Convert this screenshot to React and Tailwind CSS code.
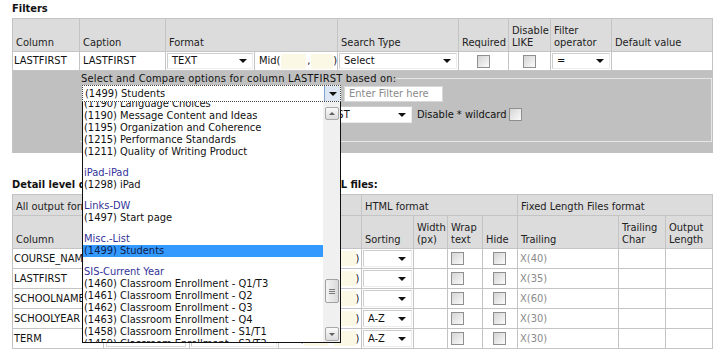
import React from "react";

function Arrow() {
  return <span className="block w-0 h-0 border-x-[4px] border-x-transparent border-t-[4px] border-t-[#111]" />;
}

function Sel({ text, className }) {
  return (
    <div className={"flex items-center justify-between bg-white border border-[#cdcdcd] border-r-[#ececec] border-b-[#ececec] pl-[4px] pr-[5px] " + className}>
      <span>{text}</span>
      <Arrow />
    </div>
  );
}

function Check() {
  return <div className="w-[13px] h-[13px] border border-[#8f8f8f] bg-linear-to-br from-[#d4d4d4] to-[#fbfbfb]" />;
}

function Beige({ className }) {
  return <div className={"h-[15px] bg-[#fbf9e6] " + className} />;
}

const hc = "bg-[#dcdcdc] border-r border-b border-[#c4c4c4] flex items-end pl-[3px] pb-[2px] text-[#222]";
const dc = "bg-white border-r border-b border-[#c4c4c4] flex items-center";

const groups = [
  { label: null, items: ["(1190) Language Choices", "(1190) Message Content and Ideas", "(1195) Organization and Coherence", "(1215) Performance Standards", "(1211) Quality of Writing Product"] },
  { label: "iPad-iPad", items: ["(1298) iPad"] },
  { label: "Links-DW", items: ["(1497) Start page"] },
  { label: "Misc.-List", items: ["(1499) Students"] },
  { label: "SIS-Current Year", items: ["(1460) Classroom Enrollment - Q1/T3", "(1461) Classroom Enrollment - Q2", "(1462) Classroom Enrollment - Q3", "(1463) Classroom Enrollment - Q4", "(1458) Classroom Enrollment - S1/T1", "(1459) Classroom Enrollment - S2/T2"] },
];

const rows = [
  { col: "COURSE_NAME", sort: "", tr: "X(40)" },
  { col: "LASTFIRST", sort: "", tr: "X(35)" },
  { col: "SCHOOLNAME", sort: "", tr: "X(60)" },
  { col: "SCHOOLYEAR", sort: "A-Z", tr: "X(30)" },
  { col: "TERM", sort: "A-Z", tr: "X(30)" },
];

export default function App() {
  return (
    <div className="relative w-[726px] h-[359px] bg-white overflow-hidden font-['DejaVu_Sans_Condensed','DejaVu_Sans',sans-serif] text-[11px] leading-[12px] text-[#111] pl-[12px] pt-[3px]">
      <div className="font-bold h-[15px]">Filters</div>

      {/* Filters table */}
      <div className="grid grid-cols-[67px_86px_89px_83px_121px_50px_42px_61px_101px] w-[701px] border-l border-t border-[#c4c4c4]">
        <div className={hc + " h-[33px]"}>Column</div>
        <div className={hc}>Caption</div>
        <div className={hc + " col-span-2"}>Format</div>
        <div className={hc}>Search Type</div>
        <div className={hc}>Required</div>
        <div className={hc}><span>Disable<br />LIKE</span></div>
        <div className={hc}><span>Filter<br />operator</span></div>
        <div className={hc}>Default value</div>

        <div className={dc + " h-[19px] pl-[1px] bg-[#f8f8f8]"}>LASTFIRST</div>
        <div className={dc + " pl-[3px]"}>LASTFIRST</div>
        <div className={dc + " p-[1px]"}><Sel text="TEXT" className="w-full h-full" /></div>
        <div className={dc + " pl-[4px]"}>
          <span>Mid(</span>
          <Beige className="w-[25px] ml-[1px]" />
          <span className="mx-[1px]">,</span>
          <Beige className="w-[22px]" />
          <span>)</span>
        </div>
        <div className={dc + " p-[1px]"}><Sel text="Select" className="w-full h-full" /></div>
        <div className={dc + " justify-center"}><Check /></div>
        <div className={dc + " justify-center"}><Check /></div>
        <div className={dc + " p-[1px]"}><Sel text="=" className="w-full h-full" /></div>
        <div className={dc}></div>

        {/* gray options row */}
        <div className="col-span-9 bg-[#c0c0c0] border-r border-b border-[#c0c0c0] pl-[67px] pt-[2px] pb-[10px]">
          <div className="flex h-[12px]">
            <span className="pl-[1px] whitespace-nowrap tracking-[0.2px]">Select and Compare options for column LASTFIRST based on:</span>
            <div className="flex-1 mt-[5px] border-t border-r border-[#e6e6e6]" />
          </div>
          <div className="border-r border-b border-[#e6e6e6] pl-[2px] pb-[18px]">
            <div className="flex items-start">
              <div className="w-[259px] h-[17px] bg-white border border-dotted border-[#444] flex items-center justify-between">
                <span className="pl-[2px]">(1499) Students</span>
                <div className="w-[16px] h-full bg-[#dde7f3] border-l border-[#7da2ce] flex items-center justify-center"><Arrow /></div>
              </div>
              <div className="ml-[3px] mt-[1px] w-[99px] h-[16px] bg-white border border-[#d8d8d8] flex items-center pl-[4px] text-[#8a8a8a]">Enter Filter here</div>
            </div>
            <div className="flex items-center mt-[4px] h-[17px]">
              <Sel text="LASTFIRST" className="ml-[204px] w-[126px] h-[17px] pl-[10px]" />
              <span className="ml-[5px]">Disable * wildcard</span>
              <div className="ml-[2px]"><Check /></div>
            </div>
          </div>
        </div>
      </div>

      <div className="font-bold mt-[26px] h-[15px] whitespace-nowrap">Detail level data columns for Text, CSV, XML, PDF and HTML files:</div>

      {/* Detail table */}
      <div className="grid grid-cols-[91px_86px_89px_83px_52px_34px_35px_35px_101px_47px_47px] w-[701px] border-l border-t border-[#c4c4c4]">
        <div className={hc + " col-span-4 h-[21px]"}>All output formats</div>
        <div className={hc + " col-span-4"}>HTML format</div>
        <div className={hc + " col-span-3"}>Fixed Length Files format</div>

        <div className={hc + " h-[33px] pb-[1px]"}>Column</div>
        <div className={hc + " pb-[1px]"}>Caption</div>
        <div className={hc + " pb-[1px]"}>Format</div>
        <div className={hc + " pb-[1px]"}>Substr</div>
        <div className={hc + " pb-[1px]"}>Sorting</div>
        <div className={hc + " pb-[1px]"}><span>Width<br />(px)</span></div>
        <div className={hc + " pb-[1px]"}><span>Wrap<br />text</span></div>
        <div className={hc + " pb-[1px]"}>Hide</div>
        <div className={hc + " pb-[1px]"}>Trailing</div>
        <div className={hc + " pb-[1px]"}><span>Trailing<br />Char</span></div>
        <div className={hc + " pb-[1px]"}><span>Output<br />Length</span></div>

        {rows.map((r) => (
          <React.Fragment key={r.col}>
            <div className={dc + " h-[20px] pl-[1px] overflow-hidden whitespace-nowrap"}>{r.col}</div>
            <div className={dc + " pl-[2px]"}><div className="w-[80px] h-[16px] border border-[#d8d8d8]" /></div>
            <div className={dc + " p-[1px]"}><Sel text="TEXT" className="w-full h-full" /></div>
            <div className={dc + " pl-[3px]"}>
              <span>Mid(</span>
              <Beige className="w-[24px] ml-[1px]" />
              <span className="mx-[1px]">,</span>
              <Beige className="w-[22px]" />
              <span>)</span>
            </div>
            <div className={dc + " p-[1px]"}><Sel text={r.sort} className="w-full h-full" /></div>
            <div className={dc}></div>
            <div className={dc + " pl-[3px]"}><Check /></div>
            <div className={dc + " pl-[10px]"}><Check /></div>
            <div className={dc + " pl-[2px] text-[#8a8a8a]"}>{r.tr}</div>
            <div className={dc}></div>
            <div className={dc}></div>
          </React.Fragment>
        ))}
      </div>

      {/* Open dropdown list */}
      <div className="absolute left-[82px] top-[102px] w-[259px] h-[241px] bg-white border-x border-b border-[#111] flex overflow-hidden">
        <div className="flex-1 overflow-hidden">
          <div className="mt-[-4px]">
            {groups.map((g, gi) => (
              <div key={gi} className={gi > 0 ? "mt-[9px]" : ""}>
                {g.label && <div className="h-[12px] pl-[1px] text-[#33339a]">{g.label}</div>}
                {g.items.map((it) => (
                  <div key={it} className={"h-[12px] pl-[1px] whitespace-nowrap " + (it === "(1499) Students" ? "bg-[#3399ff] text-[#10204a]" : "")}>{it}</div>
                ))}
              </div>
            ))}
          </div>
        </div>
        <div className="w-[17px] bg-[#f0f0f0] flex flex-col items-center pt-[5px] pb-[1px]">
          <div className="w-[14px] h-[13px] border border-[#a8a8a8] rounded-[2px] bg-linear-to-b from-[#fafafa] to-[#dcdcdc] flex items-center justify-center">
            <span className="block w-0 h-0 border-x-[3px] border-x-transparent border-b-[3px] border-b-[#606060]" />
          </div>
          <div className="flex-1 w-full flex flex-col items-center">
            <div className="mt-[159px] w-[14px] h-[24px] border border-[#a0a0a0] rounded-[2px] bg-linear-to-r from-[#f4f4f4] to-[#dadada] flex flex-col items-center justify-center gap-[1px]">
              <div className="w-[6px] h-px bg-[#7a7a7a]" />
              <div className="w-[6px] h-px bg-[#7a7a7a]" />
              <div className="w-[6px] h-px bg-[#7a7a7a]" />
            </div>
          </div>
          <div className="w-[14px] h-[14px] border border-[#a8a8a8] rounded-[2px] bg-linear-to-b from-[#fafafa] to-[#dcdcdc] flex items-center justify-center">
            <span className="block w-0 h-0 border-x-[3px] border-x-transparent border-t-[3px] border-t-[#606060]" />
          </div>
        </div>
      </div>
    </div>
  );
}
